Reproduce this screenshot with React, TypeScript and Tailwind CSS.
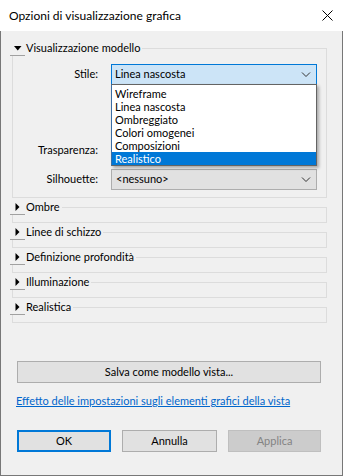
import React from "react";

const font = "font-['Lato','Liberation_Sans',sans-serif]";

function Toggle({ open }: { open?: boolean }) {
  return (
    <div className="w-[15px] h-[15px] flex items-center justify-center border-b border-[#a0a0a0] bg-[#f0f0f0]">
      {open ? (
        <svg width="8" height="5" viewBox="0 0 8 5">
          <path d="M0 0 H7.5 L3.75 4.5 Z" fill="#000" />
        </svg>
      ) : (
        <svg width="5" height="8" viewBox="0 0 5 8">
          <path d="M0.5 0 V8 L4.5 4 Z" fill="#000" />
        </svg>
      )}
    </div>
  );
}

function Header({ title, open }: { title: string; open?: boolean }) {
  return (
    <div className="-ml-[3px] -mt-[8px] flex items-start h-[15px]">
      <Toggle open={open} />
      <span className="bg-[#f0f0f0] pl-[1px] pr-[2px] leading-[14px]">{title}</span>
    </div>
  );
}

function Collapsed({ title }: { title: string }) {
  return (
    <div className="ml-[11px] mt-[9px] w-[315px] h-[16px] border border-[#dcdcdc]">
      <Header title={title} />
    </div>
  );
}

function Chevron() {
  return (
    <svg width="10" height="6" viewBox="0 0 10 6">
      <path d="M1 0.5 L5 4.5 L9 0.5" fill="none" stroke="#333" strokeWidth="1" />
    </svg>
  );
}

const options = ["Wireframe", "Linea nascosta", "Ombreggiato", "Colori omogenei", "Composizioni", "Realistico"];

export default function App() {
  return (
    <div className={`w-[343px] h-[476px] flex flex-col text-[11px] text-black ${font}`}>
      <div className="h-[31px] shrink-0 bg-white flex items-center justify-between pl-[9px] pr-[10px]">
        <span className="text-[12px]">Opzioni di visualizzazione grafica</span>
        <svg width="11" height="11" viewBox="0 0 11 11">
          <path d="M0.5 0.5 L10.5 10.5 M10.5 0.5 L0.5 10.5" stroke="#000" strokeWidth="1" />
        </svg>
      </div>
      <div className="flex-1 bg-[#f0f0f0] border-x border-b border-[#777777] flex flex-col">
        {/* Visualizzazione modello */}
        <div className="ml-[11px] mt-[17px] w-[315px] border border-[#dcdcdc] pb-[7px]">
          <Header title="Visualizzazione modello" open />
          <div className="mt-[8px] flex items-center">
            <span className="w-[85px] text-right">Stile:</span>
            <div className="relative ml-[13px] w-[206px]">
              <div className="h-[21px] bg-[#cce4f7] border border-[#0078d7] flex items-center justify-between pl-[3px] pr-[5px]">
                <span>Linea nascosta</span>
                <Chevron />
              </div>
              <div className="absolute left-0 top-[20px] z-10 w-[206px] bg-white border border-[#646464] border-l-[#3b6ea5] pt-[2px] shadow-[2px_2px_3px_rgba(0,0,0,0.3)]">
                {options.map((o) => (
                  <div
                    key={o}
                    className={`h-[13px] leading-[13px] pl-[3px] ${o === "Realistico" ? "bg-[#0078d7] text-white" : ""}`}
                  >
                    {o}
                  </div>
                ))}
              </div>
            </div>
          </div>
          <div className="h-[53px]" />
          <div className="flex items-center h-[24px]">
            <span className="w-[85px] text-right">Trasparenza:</span>
          </div>
          <div className="mt-[7px] flex items-center">
            <span className="w-[85px] text-right">Silhouette:</span>
            <div className="ml-[13px] w-[206px] h-[21px] bg-[#e1e1e1] border border-[#adadad] flex items-center justify-between pl-[4px] pr-[5px]">
              <span>&lt;nessuno&gt;</span>
              <Chevron />
            </div>
          </div>
        </div>

        <Collapsed title="Ombre" />
        <Collapsed title="Linee di schizzo" />
        <Collapsed title="Definizione profondità" />
        <Collapsed title="Illuminazione" />
        <Collapsed title="Realistica" />

        <button
          type="button"
          className="ml-[16px] mt-[38px] w-[304px] h-[22px] bg-[#e1e1e1] border border-[#adadad]"
        >
          Salva come modello vista...
        </button>
        <a className="ml-[15px] mt-[11px] text-[#0066cc] underline leading-[14px] cursor-pointer">
          Effetto delle impostazioni sugli elementi grafici della vista
        </a>
        <div className="mt-[22px] ml-[16px] flex">
          <button type="button" className="w-[94px] h-[22px] bg-[#e1e1e1] border-2 border-[#0078d7]">
            OK
          </button>
          <button type="button" className="ml-[11px] w-[95px] h-[22px] bg-[#e1e1e1] border border-[#adadad]">
            Annulla
          </button>
          <button type="button" className="ml-[11px] w-[93px] h-[22px] bg-[#cccccc] border border-[#bfbfbf] text-[#838383]">
            Applica
          </button>
        </div>
      </div>
    </div>
  );
}
